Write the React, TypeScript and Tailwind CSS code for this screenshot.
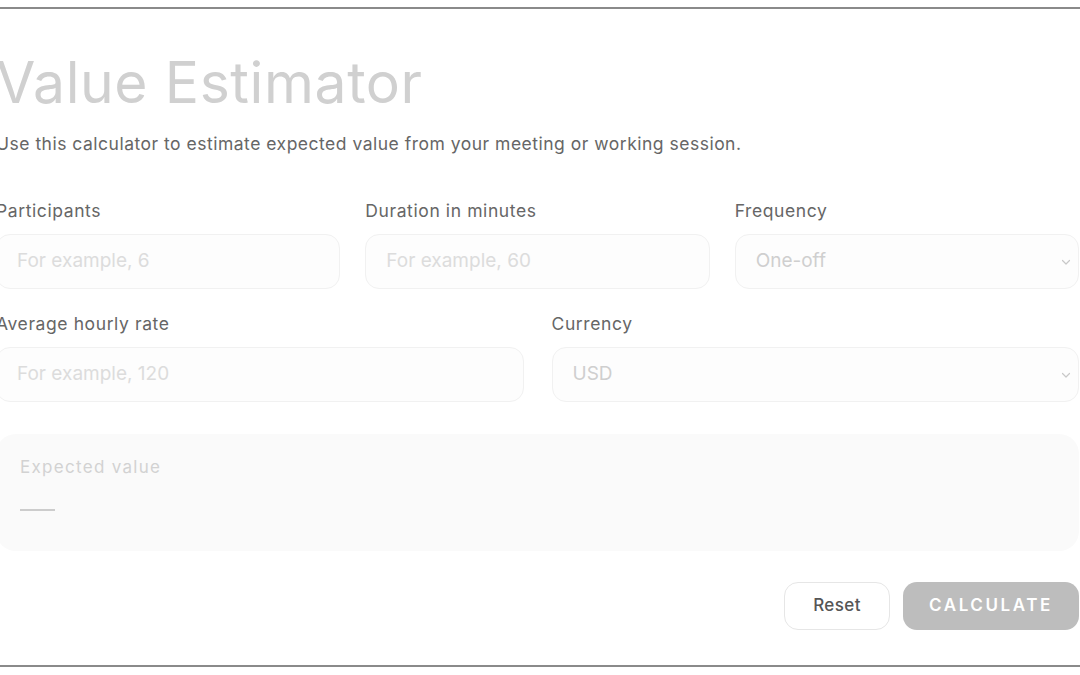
import React from 'react';

const FONT = { fontFamily: 'Inter, "Noto Sans", sans-serif' };

function Chevron() {
  return (
    <svg className="absolute right-[5px] top-1/2 -translate-y-1/2 w-[14px] h-[14px] text-[#c8c8c8]" viewBox="0 0 14 14" fill="none">
      <path d="M3.5 5.5 7 9 10.5 5.5" stroke="currentColor" strokeWidth="1.2" strokeLinecap="round" strokeLinejoin="round" />
    </svg>
  );
}

function Field({ label, placeholder, select }: { label: string; placeholder: string; select?: boolean }) {
  return (
    <div className="flex flex-col min-w-0">
      <label className="text-[17.5px] leading-[22px] tracking-[0.6px] text-[#666] mb-[12px]">{label}</label>
      <div className="relative h-[55px] rounded-[14px] border border-[#f1f1f1] bg-[#fdfdfd] flex items-center pl-[20px]">
        <span className={select ? 'text-[19px] text-[#cfcfcf]' : 'text-[19px] text-[#dcdcdc]'}>{placeholder}</span>
        {select && <Chevron />}
      </div>
    </div>
  );
}

export default function App() {
  return (
    <div className="w-[1080px] h-[675px] bg-white overflow-hidden pt-[7px]" style={FONT}>
      <div className="h-[660px] border-y-2 border-[#8a8a8a] overflow-hidden">
        <div className="w-[1083px] -ml-[4px] pt-[45px]">
          <h1 className="text-[57px] leading-[57px] text-[#d0d0d0] font-normal tracking-[0.6px]">Value Estimator</h1>
          <p className="mt-[21px] text-[17.5px] leading-[24px] tracking-[0.5px] text-[#666]">
            Use this calculator to estimate expected value from your meeting or working session.
          </p>

          <div className="mt-[44px] grid grid-cols-3 gap-x-[25px]">
            <Field label="Participants" placeholder="For example, 6" />
            <Field label="Duration in minutes" placeholder="For example, 60" />
            <Field label="Frequency" placeholder="One-off" select />
          </div>

          <div className="mt-[24px] grid grid-cols-2 gap-x-[28px]">
            <Field label="Average hourly rate" placeholder="For example, 120" />
            <Field label="Currency" placeholder="USD" select />
          </div>

          <div className="mt-[32px] h-[117px] rounded-[20px] bg-[#fafafa] px-[24px] pt-[22px]">
            <div className="text-[17px] leading-[22px] text-[#d2d2d2] tracking-[1.3px]">Expected value</div>
            <div className="mt-[31px] w-[35px] h-[2px] bg-[#cccccc]" />
          </div>

          <div className="mt-[31px] flex justify-end gap-[13px]">
            <button className="h-[48px] w-[106px] rounded-[14px] border border-[#e6e6e6] bg-white text-[17px] tracking-[0.4px] font-medium text-[#555]">
              Reset
            </button>
            <button className="h-[48px] w-[176px] rounded-[14px] bg-[#bdbdbd] text-[17px] font-semibold tracking-[2.6px] text-white">
              CALCULATE
            </button>
          </div>
        </div>
      </div>
    </div>
  );
}
